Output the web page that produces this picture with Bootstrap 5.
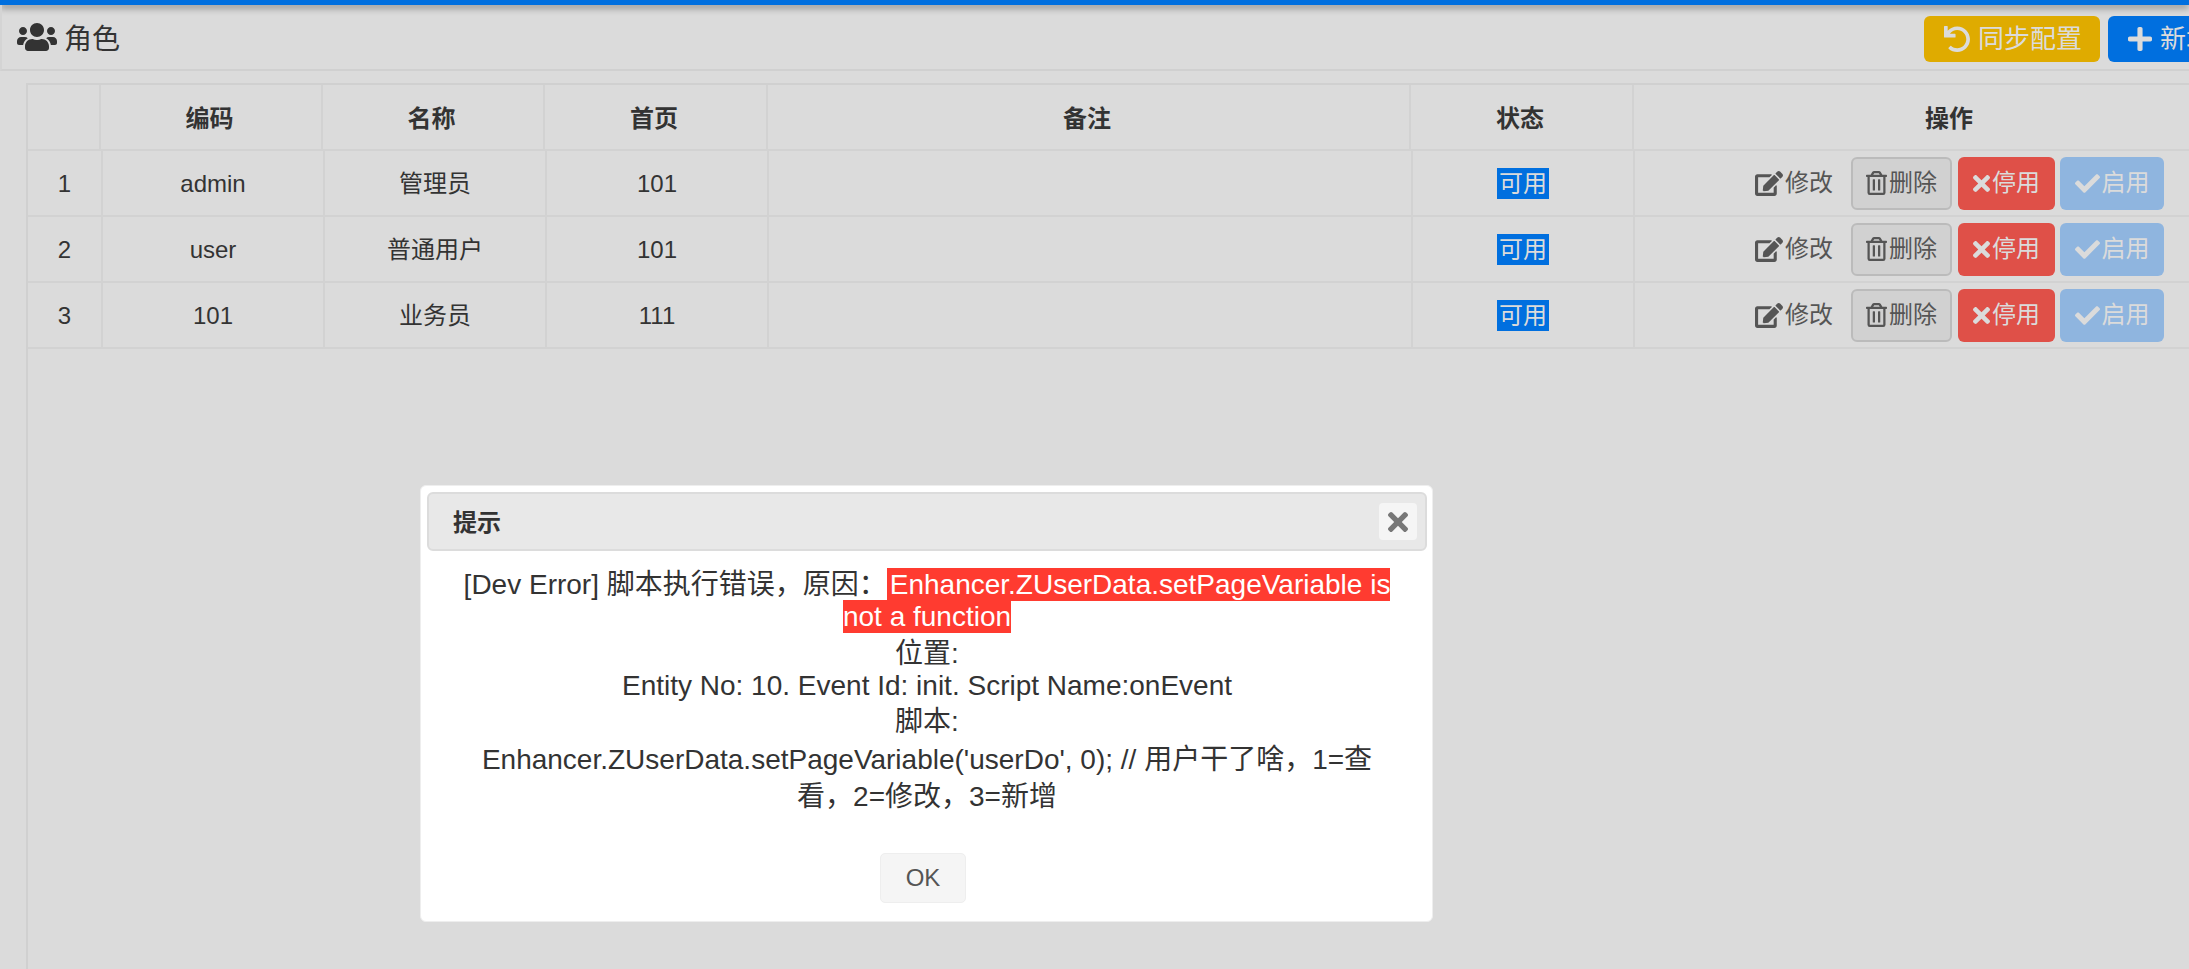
<!DOCTYPE html>
<html lang="zh">
<head>
<meta charset="utf-8">
<title>角色</title>
<link href="https://cdn.jsdelivr.net/npm/bootstrap@5.3.0/dist/css/bootstrap.min.css" rel="stylesheet">
<style>
html,body{height:100%;overflow:hidden}
body{background:#dbdbdb;color:#333;font-family:"Liberation Sans","Noto Sans CJK SC",sans-serif;font-size:24px}
.ico{fill:currentColor;flex:none;display:block}
.topline{height:5px;background:#006fdf;box-shadow:0 3px 7px rgba(0,0,0,.4)}
.pagehead{height:66px;border-bottom:2px solid #d0d0d0;border-left:2px solid #d4d4d4;padding:0 0 0 15px;white-space:nowrap}
.pagetitle{font-size:28px;line-height:46px;margin:5px 0 0 7px}
.headbtns{width:2300px;flex:none;position:absolute;left:1924px;top:16px}
.hbtn{height:46px;border:0;border-radius:6px;color:#dbdbdb;font-size:26px;line-height:46px;padding:0 18px 0 20px;white-space:nowrap}
.hbtn:hover{color:#dbdbdb}
.hb-yellow{background:#dfab00;width:176px}
.hb-blue{background:#006fdf;width:150px}
.gridbox{margin:12px 0 0 26px;border-left:2px solid #d0d0d0;border-top:2px solid #d0d0d0;height:900px;width:2300px}
.grid{table-layout:fixed;border-collapse:separate;border-spacing:0;width:2241px;margin:0;--bs-table-bg:transparent;--bs-table-color:#333;--bs-border-width:0}
.grid th,.grid td{padding:0;text-align:center;vertical-align:middle;border:0;border-right:2px solid #d2d2d2;border-bottom:2px solid #d2d2d2;background:transparent;box-shadow:none}
.grid th{height:66px;font-weight:700;padding:4px 3px 0 0}
.grid td{height:66px;padding-top:2px}
.grid td.opcell{padding-top:0}
.grid td.statcell{padding:0 0 3px}
.c1{width:73px}.c2,.c3{width:222px}.c4{width:223px}.c5{width:643px}.c6{width:223px}
.gridb .c1{width:75px}
.gridb .c4{width:222px}
.gridb .c5{width:644px}
.gridb .c6{width:222px}
.stat{display:inline-block;background:#006fdf;color:#dbdbdb;line-height:31px;height:31px;width:52px;font-size:24px;vertical-align:middle}
.ops{padding-left:120px;height:53px;white-space:nowrap}
.opbtn{height:53px;border-radius:6px;border:0;font-size:24px;padding:0;color:#dbdbdb;line-height:1}
.opbtn:hover{color:#dbdbdb}
.op-edit{width:77px;color:#555;background:transparent;margin-right:19px}
.op-edit:hover{color:#555}
.op-del{width:101px;background:#d1d1d1;border:2px solid #bbb;color:#555;margin-right:6px}
.op-del:hover{color:#555}
.op-stop{width:97px;background:#df5048;margin-right:5px}
.op-start{width:104px;background:#8fb5df}
.ig1{margin-right:2px}
.errdlg{margin:485px 0 0 420px;width:1013px;max-width:none}
.errbox{border:1px solid #eee;border-radius:6px;padding:6px 5px 6px 6px;height:437px;background:#fff;display:block}
.errhead{height:59px;background:#e8e8e8;border:2px solid #dcdcdc;border-radius:6px;padding:3px 8px 0 24px}
.errtitle{font-size:24px;font-weight:700;color:#333;line-height:1}
.errclose{width:38px;height:37px;background:#f5f5f5;border:0;border-radius:4px;padding:0;color:#777;margin-top:-3px}
.errmsg{padding:18px 0 0;text-align:center;color:#333;font-size:28px}
.ln{line-height:32px;white-space:nowrap}
.gap4{margin-top:5px}
.gap2{margin-top:4px}
.gap3{margin-top:6px}
.redt{background:#ff3b30;color:#fff;padding:1px 0}
.redt1{padding-left:3px}
.okrow{margin-top:40px;padding-right:8px}
.okbtn{width:86px;height:50px;background:#f5f5f5;border:1px solid #eee;border-radius:5px;color:#555;font-size:24px;padding:0}
</style>
</head>
<body>
<svg width="0" height="0" class="position-absolute">
<symbol id="i-users" viewBox="0 32 640 448" preserveAspectRatio="none"><path d="M96 224c35.300 0 64-28.700 64-64s-28.700-64-64-64-64 28.700-64 64 28.700 64 64 64zm448 0c35.300 0 64-28.700 64-64s-28.700-64-64-64-64 28.700-64 64 28.700 64 64 64zm32 32h-64c-17.600 0-33.500 7.100-45.100 18.600 40.300 22.100 68.900 62 75.100 109.400h66c17.700 0 32-14.300 32-32v-32c0-35.300-28.700-64-64-64zm-256 0c61.900 0 112-50.100 112-112S381.900 32 320 32 208 82.100 208 144s50.100 112 112 112zm76.800 32h-8.300c-20.800 10-43.900 16-68.500 16s-47.600-6-68.500-16h-8.300C179.600 288 128 339.600 128 403.200V432c0 26.500 21.500 48 48 48h288c26.500 0 48-21.500 48-48v-28.800c0-63.600-51.600-115.200-115.200-115.200zm-223.700-13.400C161.500 263.100 145.600 256 128 256H64c-35.300 0-64 28.700-64 64v32c0 17.700 14.300 32 32 32h65.900c6.300-47.400 34.900-87.300 75.200-109.400z"/></symbol>
<symbol id="i-edit" viewBox="0 0 576 512"><path d="M402.600 83.200l90.200 90.200c3.800 3.800 3.800 10 0 13.800L274.400 405.600l-92.800 10.300c-12.400 1.400-22.900-9.100-21.500-21.500l10.300-92.800L388.800 83.200c3.800-3.800 10-3.800 13.800 0zm162-22.900l-48.800-48.800c-15.200-15.200-39.900-15.200-55.200 0l-35.400 35.400c-3.800 3.800-3.800 10 0 13.800l90.200 90.200c3.800 3.800 10 3.800 13.800 0l35.400-35.400c15.200-15.300 15.200-40 0-55.200zM384 346.200V448H64V128h229.800c3.200 0 6.200-1.300 8.500-3.500l40-40c7.600-7.600 2.200-20.500-8.500-20.500H48C21.500 64 0 85.500 0 112v352c0 26.500 21.500 48 48 48h352c26.500 0 48-21.500 48-48V306.200c0-10.700-12.900-16-20.500-8.500l-40 40c-2.200 2.300-3.500 5.300-3.500 8.500z"/></symbol>
<symbol id="i-trash" viewBox="0 0 448 512"><path d="M268 416h24a12 12 0 0 0 12-12V188a12 12 0 0 0-12-12h-24a12 12 0 0 0-12 12v216a12 12 0 0 0 12 12zM432 80h-82.410l-34-56.700A48 48 0 0 0 274.410 0H173.590a48 48 0 0 0-41.160 23.300L98.410 80H16A16 16 0 0 0 0 96v16a16 16 0 0 0 16 16h16v336a48 48 0 0 0 48 48h288a48 48 0 0 0 48-48V128h16a16 16 0 0 0 16-16V96a16 16 0 0 0-16-16zM171.840 50.910A6 6 0 0 1 177 48h94a6 6 0 0 1 5.150 2.910L293.610 80H154.390zM368 464H80V128h288zm-212-48h24a12 12 0 0 0 12-12V188a12 12 0 0 0-12-12h-24a12 12 0 0 0-12 12v216a12 12 0 0 0 12 12z"/></symbol>
<symbol id="i-times" viewBox="0 80 352 352"><path d="M242.720 256l100.070-100.070c12.280-12.280 12.280-32.190 0-44.480l-22.240-22.240c-12.280-12.280-32.190-12.280-44.480 0L176 189.280 75.930 89.210c-12.280-12.280-32.190-12.280-44.480 0L9.210 111.450c-12.280 12.280-12.280 32.190 0 44.480L109.280 256 9.210 356.070c-12.280 12.280-12.280 32.190 0 44.480l22.240 22.240c12.280 12.280 32.200 12.280 44.480 0L176 322.720l100.070 100.070c12.280 12.280 32.200 12.280 44.480 0l22.240-22.240c12.280-12.280 12.280-32.190 0-44.480L242.720 256z"/></symbol>
<symbol id="i-check" viewBox="0 65 512 382"><path d="M173.898 439.404l-166.400-166.400c-9.997-9.997-9.997-26.206 0-36.204l36.203-36.204c9.997-9.998 26.207-9.998 36.204 0L192 312.690 432.095 72.596c9.997-9.997 26.207-9.997 36.204 0l36.203 36.204c9.997 9.997 9.997 26.206 0 36.204l-294.400 294.401c-9.998 9.997-26.207 9.997-36.204-.001z"/></symbol>
<symbol id="i-undo" viewBox="0 0 505 505"><path d="M212.333 224.333H12c-6.627 0-12-5.373-12-12V12C0 5.373 5.373 0 12 0h48c6.627 0 12 5.373 12 12v78.112C117.773 39.279 184.260 7.530 258.175 8.007c136.906.883 246.448 111.623 246.157 248.532C504.041 393.258 393.120 504 256.333 504c-64.089 0-122.496-24.313-166.519-64.210-5.099-4.622-5.334-12.554-.467-17.420l33.967-33.967c4.474-4.474 11.662-4.717 16.401-.525C170.800 415.336 211.614 432 256.333 432c97.268 0 176-78.716 176-176 0-97.267-78.716-176-176-176-58.496 0-110.286 28.476-142.274 72.333h98.274c6.627 0 12 5.373 12 12v48c0 6.627-5.373 12-12 12z"/></symbol>
<symbol id="i-plus" viewBox="0 32 448 448"><path d="M416 208H272V64c0-17.670-14.330-32-32-32h-32c-17.670 0-32 14.330-32 32v144H32c-17.670 0-32 14.330-32 32v32c0 17.670 14.330 32 32 32h144v144c0 17.670 14.330 32 32 32h32c17.670 0 32-14.330 32-32V304h144c17.670 0 32-14.330 32-32v-32c0-17.670-14.330-32-32-32z"/></symbol>
</svg>

<div class="topline"></div>
<header class="pagehead d-flex align-items-center position-relative">
  <svg class="ico" width="40" height="28"><use href="#i-users"/></svg>
  <span class="pagetitle">角色</span>
</header>
<div class="headbtns d-flex gap-2">
  <button class="btn hbtn hb-yellow d-flex align-items-center gap-2" type="button"><svg class="ico" width="26" height="26"><use href="#i-undo"/></svg>同步配置</button>
  <button class="btn hbtn hb-blue d-flex align-items-center gap-2" type="button"><svg class="ico" width="24" height="24"><use href="#i-plus"/></svg>新增</button>
</div>

<main class="gridbox">
  <table class="table grid">
    <thead><tr>
      <th class="c1"></th><th class="c2">编码</th><th class="c3">名称</th><th class="c4">首页</th><th class="c5">备注</th><th class="c6">状态</th><th>操作</th>
    </tr></thead>
  </table>
  <table class="table grid gridb">
    <tbody>
      <tr>
        <td class="c1">1</td><td class="c2">admin</td><td class="c3">管理员</td><td class="c4">101</td><td class="c5"></td><td class="c6 statcell"><span class="stat">可用</span></td>
        <td class="opcell"><div class="ops d-flex align-items-center">
          <a class="btn opbtn op-edit d-inline-flex align-items-center" href="#"><svg class="ico ig1" width="28" height="25"><use href="#i-edit"/></svg>修改</a>
          <button class="btn opbtn op-del d-inline-flex align-items-center justify-content-center" type="button"><svg class="ico ig1" width="21" height="24"><use href="#i-trash"/></svg>删除</button>
          <button class="btn opbtn op-stop d-inline-flex align-items-center justify-content-center" type="button"><svg class="ico ig1" width="17" height="17"><use href="#i-times"/></svg>停用</button>
          <button class="btn opbtn op-start d-inline-flex align-items-center justify-content-center" type="button"><svg class="ico ig1" width="25" height="19"><use href="#i-check"/></svg>启用</button>
        </div></td>
      </tr>
      <tr>
        <td class="c1">2</td><td class="c2">user</td><td class="c3">普通用户</td><td class="c4">101</td><td class="c5"></td><td class="c6 statcell"><span class="stat">可用</span></td>
        <td class="opcell"><div class="ops d-flex align-items-center">
          <a class="btn opbtn op-edit d-inline-flex align-items-center" href="#"><svg class="ico ig1" width="28" height="25"><use href="#i-edit"/></svg>修改</a>
          <button class="btn opbtn op-del d-inline-flex align-items-center justify-content-center" type="button"><svg class="ico ig1" width="21" height="24"><use href="#i-trash"/></svg>删除</button>
          <button class="btn opbtn op-stop d-inline-flex align-items-center justify-content-center" type="button"><svg class="ico ig1" width="17" height="17"><use href="#i-times"/></svg>停用</button>
          <button class="btn opbtn op-start d-inline-flex align-items-center justify-content-center" type="button"><svg class="ico ig1" width="25" height="19"><use href="#i-check"/></svg>启用</button>
        </div></td>
      </tr>
      <tr>
        <td class="c1">3</td><td class="c2">101</td><td class="c3">业务员</td><td class="c4">111</td><td class="c5"></td><td class="c6 statcell"><span class="stat">可用</span></td>
        <td class="opcell"><div class="ops d-flex align-items-center">
          <a class="btn opbtn op-edit d-inline-flex align-items-center" href="#"><svg class="ico ig1" width="28" height="25"><use href="#i-edit"/></svg>修改</a>
          <button class="btn opbtn op-del d-inline-flex align-items-center justify-content-center" type="button"><svg class="ico ig1" width="21" height="24"><use href="#i-trash"/></svg>删除</button>
          <button class="btn opbtn op-stop d-inline-flex align-items-center justify-content-center" type="button"><svg class="ico ig1" width="17" height="17"><use href="#i-times"/></svg>停用</button>
          <button class="btn opbtn op-start d-inline-flex align-items-center justify-content-center" type="button"><svg class="ico ig1" width="25" height="19"><use href="#i-check"/></svg>启用</button>
        </div></td>
      </tr>
    </tbody>
  </table>
</main>

<div class="modal d-block" tabindex="-1">
  <div class="modal-dialog errdlg">
    <div class="modal-content errbox">
      <div class="errhead d-flex align-items-center justify-content-between">
        <h5 class="errtitle m-0">提示</h5>
        <button class="errclose d-flex align-items-center justify-content-center" type="button" aria-label="Close"><svg class="ico" width="20" height="20"><use href="#i-times"/></svg></button>
      </div>
      <div class="errmsg">
        <div class="ln">[Dev Error] 脚本执行错误，原因：<span class="redt redt1">Enhancer.ZUserData.setPageVariable is</span></div>
        <div class="ln"><span class="redt">not a function</span></div>
        <div class="ln gap4">位置:</div>
        <div class="ln">Entity No: 10. Event Id: init. Script Name:onEvent</div>
        <div class="ln gap2">脚本:</div>
        <div class="ln gap3">Enhancer.ZUserData.setPageVariable('userDo', 0); // 用户干了啥，1=查</div>
        <div class="ln gap4">看，2=修改，3=新增</div>
      </div>
      <div class="okrow text-center"><button class="okbtn" type="button">OK</button></div>
    </div>
  </div>
</div>
<script src="https://cdn.jsdelivr.net/npm/bootstrap@5.3.0/dist/js/bootstrap.bundle.min.js"></script>
</body>
</html>
